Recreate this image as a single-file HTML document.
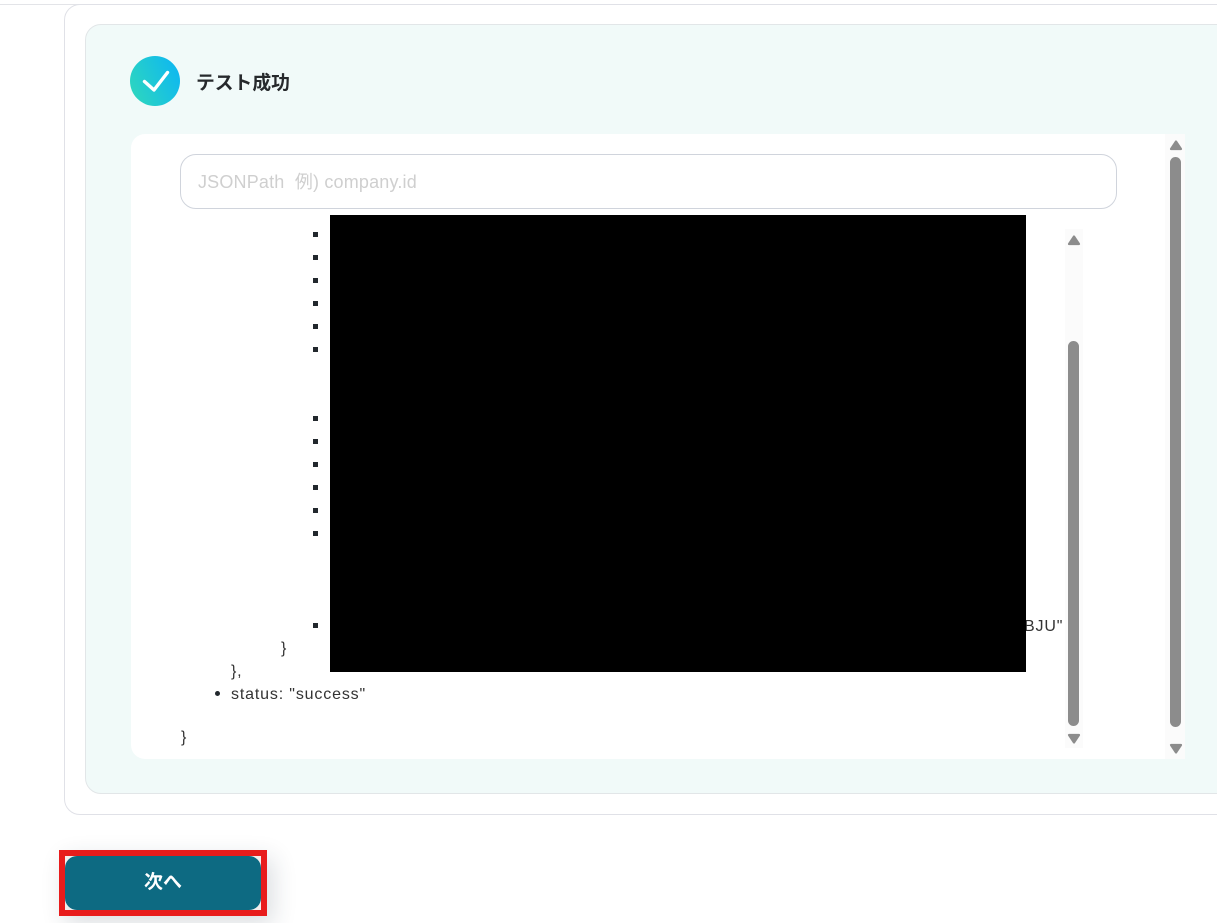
<!DOCTYPE html>
<html lang="ja">
<head>
<meta charset="utf-8">
<title>テスト成功</title>
<style>
html,body{margin:0;padding:0;background:#fff;}
body{position:relative;width:1217px;height:923px;overflow:hidden;font-family:"Liberation Sans","Noto Sans CJK JP",sans-serif;color:#333;}
.a{position:absolute;box-sizing:border-box;}
.sq{position:absolute;left:313px;width:5px;height:5px;background:#22282d;}
.t{position:absolute;font-size:16px;line-height:20px;color:#333;white-space:nowrap;letter-spacing:.84px;}
.thumb{position:absolute;background:#8c8c8c;border-radius:6px;}
.track{position:absolute;background:#fbfbfb;}
svg{position:absolute;display:block;}
</style>
</head>
<body>
<div class="a" style="left:0;top:4px;width:1217px;height:1px;background:#e3e4e8;"></div>
<div class="a" style="left:64px;top:4px;width:1300px;height:811px;border:1px solid #e0e1e7;border-radius:16px;background:#fff;"></div>
<div class="a" style="left:85px;top:24px;width:1300px;height:770px;border:1px solid #e2e6e8;border-radius:16px;background:#f1faf9;"></div>

<svg style="left:130px;top:56px" width="50" height="50" viewBox="0 0 50 50">
<defs><linearGradient id="g" x1="0" y1="0.75" x2="1" y2="0.3"><stop offset="0" stop-color="#2dd6bf"/><stop offset="1" stop-color="#0fb8f0"/></linearGradient></defs>
<circle cx="25" cy="25" r="25" fill="url(#g)"/>
<path d="M14.5 25.5 L24 34 L37.5 16.5" fill="none" stroke="#fff" stroke-width="3.4" stroke-linecap="round" stroke-linejoin="round"/>
</svg>
<div class="a" style="left:196px;top:70px;font-size:18.8px;line-height:26px;font-weight:700;color:#26292c;white-space:nowrap;">テスト成功</div>

<div class="a" style="left:131px;top:134px;width:1054px;height:625px;background:#fff;border-radius:14px 0 0 14px;"></div>
<div class="track" style="left:1165px;top:134px;width:20px;height:625px;"></div>
<svg style="left:1169px;top:139px" width="14" height="12" viewBox="0 0 14 12"><path d="M7 2.5 L12 10 L2 10 Z" fill="#8c8c8c" stroke="#8c8c8c" stroke-width="2.2" stroke-linejoin="round"/></svg>
<div class="thumb" style="left:1170px;top:157px;width:11px;height:570px;"></div>
<svg style="left:1169px;top:743px" width="14" height="12" viewBox="0 0 14 12"><path d="M2 2 L12 2 L7 9.5 Z" fill="#8c8c8c" stroke="#8c8c8c" stroke-width="2.2" stroke-linejoin="round"/></svg>

<div class="a" style="left:180px;top:154px;width:937px;height:55px;border:1px solid #d0d4dc;border-radius:16px;background:#fff;"></div>
<div class="a" style="left:198px;top:170px;font-size:18px;line-height:24px;color:#cfcfcf;white-space:nowrap;letter-spacing:.18px;">JSONPath&nbsp; 例) company.id</div>

<i class="sq" style="top:232px"></i>
<i class="sq" style="top:255px"></i>
<i class="sq" style="top:278px"></i>
<i class="sq" style="top:301px"></i>
<i class="sq" style="top:324px"></i>
<i class="sq" style="top:347px"></i>
<i class="sq" style="top:416px"></i>
<i class="sq" style="top:439px"></i>
<i class="sq" style="top:462px"></i>
<i class="sq" style="top:485px"></i>
<i class="sq" style="top:508px"></i>
<i class="sq" style="top:531px"></i>
<i class="sq" style="top:623px"></i>

<div class="t" style="left:1024px;top:617px;">BJU"</div>
<div class="a" style="left:330px;top:215px;width:696px;height:457px;background:#000;"></div>

<div class="t" style="left:281px;top:639px;">}</div>
<div class="t" style="left:231px;top:662px;">},</div>
<div class="a" style="left:215px;top:691px;width:5px;height:5px;border-radius:50%;background:#22282d;"></div>
<div class="t" style="left:231px;top:685px;">status: "success"</div>
<div class="t" style="left:181px;top:728px;">}</div>

<div class="track" style="left:1065px;top:229px;width:18px;height:519px;"></div>
<svg style="left:1067px;top:234px" width="14" height="12" viewBox="0 0 14 12"><path d="M7 2.5 L12 10 L2 10 Z" fill="#8c8c8c" stroke="#8c8c8c" stroke-width="2.2" stroke-linejoin="round"/></svg>
<div class="thumb" style="left:1068px;top:341px;width:11px;height:385px;"></div>
<svg style="left:1067px;top:733px" width="14" height="12" viewBox="0 0 14 12"><path d="M2 2 L12 2 L7 9.5 Z" fill="#8c8c8c" stroke="#8c8c8c" stroke-width="2.2" stroke-linejoin="round"/></svg>

<div class="a" style="left:59px;top:850px;width:208px;height:66px;background:#f2eeee;box-shadow:6px 8px 24px rgba(30,50,70,.16);"></div>
<div class="a" style="left:65px;top:856px;width:196px;height:54px;background:#0d6a82;border-radius:12px;"></div>
<div class="a" style="left:59px;top:850px;width:208px;height:66px;border:6px solid #e81c1c;"></div>
<div class="a" style="left:65px;top:869px;width:196px;line-height:28px;text-align:center;font-size:19px;font-weight:700;color:#fff;">次へ</div>
</body>
</html>
